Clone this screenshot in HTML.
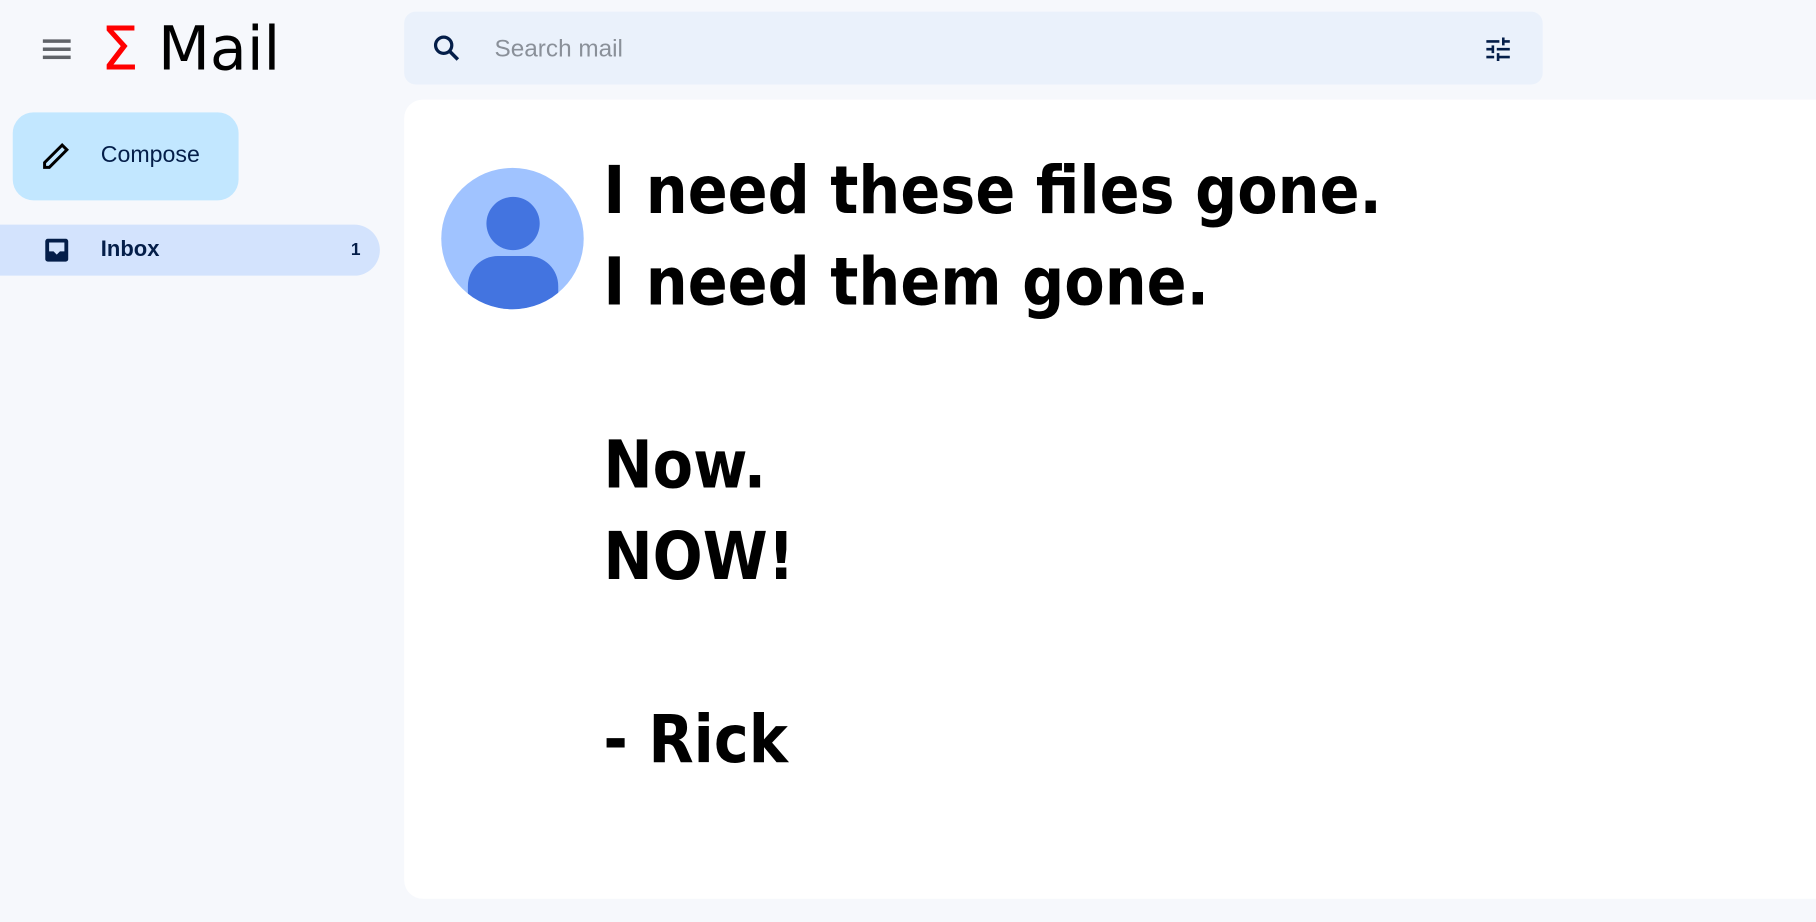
<!DOCTYPE html>
<html><head><meta charset="utf-8"><style>
html,body{margin:0;padding:0;width:1816px;height:922px;overflow:hidden;background:#f6f8fc;}
#w{position:absolute;left:0;top:0;width:1568px;height:796px;transform:scale(1.15816);transform-origin:0 0;font-family:"Liberation Sans",sans-serif;}
.abs{position:absolute;}
.msg{font-family:"DejaVu Sans","Liberation Sans",sans-serif;font-weight:bold;font-size:57px;color:#000;line-height:79px;white-space:pre;transform:scaleX(0.892);transform-origin:0 0;}
</style></head><body><div id="w">
<div class="abs" style="left:37px;top:34px;width:24px;height:3px;background:#5f6368;box-shadow:0 7px 0 #5f6368,0 14px 0 #5f6368"></div>
<div class="abs" style="left:87px;top:13px;font-size:52px;font-family:'DejaVu Sans',sans-serif;line-height:60px;"><span style="color:#f00">Σ</span> Mail</div>
<div class="abs" style="left:349px;top:10px;width:983px;height:63px;background:#eaf1fb;border-radius:10px;"></div>
<svg class="abs" style="left:372px;top:28px" width="28" height="28" viewBox="0 0 24 24"><circle cx="9.5" cy="9.5" r="6" fill="none" stroke="#041e49" stroke-width="2.4"/><path d="M14 14l6 6" stroke="#041e49" stroke-width="2.6"/></svg>
<div class="abs" style="left:427px;top:31px;font-size:21px;color:#8a9099">Search mail</div>
<svg class="abs" style="left:1280px;top:29px" width="27" height="27" viewBox="0 0 24 24" fill="#041e49"><path d="M3 17v2h6v-2H3zM3 5v2h10V5H3zm10 16v-2h8v-2h-8v-2h-2v6h2zM7 9v2H3v2h4v2h2V9H7zm14 4v-2H11v2h10zm-6-4h2V7h4V5h-4V3h-2v6z"/></svg>
<div class="abs" style="left:11px;top:97px;width:195px;height:76px;background:#c2e7ff;border-radius:18px;"></div>
<svg class="abs" style="left:35px;top:120px" width="28" height="28" viewBox="0 0 24 24"><path d="M3 21v-3.5L16 4.5l3.5 3.5L6.5 21z" fill="none" stroke="#000" stroke-width="2.2"/></svg>
<div class="abs" style="left:87px;top:123px;font-size:20px;color:#041e49">Compose</div>
<div class="abs" style="left:0;top:194px;width:328px;height:44px;background:#d3e3fd;border-radius:0 22px 22px 0;"></div>
<svg class="abs" style="left:38px;top:205px" width="22" height="22" viewBox="0 0 20 20"><rect x="1" y="1" width="18" height="18" rx="2" fill="#041e49"/><path d="M4 4h12v7h-3.5l-2.5 2.5-2.5-2.5H4z" fill="#d3e3fd"/></svg>
<div class="abs" style="left:87px;top:205px;font-size:19px;font-weight:bold;color:#041e49">Inbox</div>
<div class="abs" style="left:303px;top:207px;font-size:15px;font-weight:bold;color:#041e49">1</div>
<div class="abs" style="left:349px;top:86px;width:1240px;height:690px;background:#fff;border-radius:16px;"></div>
<div class="abs" style="left:381px;top:145px;width:123px;height:122px;border-radius:50%;background:#a0c3ff;overflow:hidden;">
<div class="abs" style="left:39px;top:25px;width:46px;height:46px;border-radius:50%;background:#4374e0"></div>
<div class="abs" style="left:23px;top:76px;width:78px;height:60px;border-radius:26px 26px 0 0;background:#4374e0"></div></div>
<div class="abs msg" style="left:521px;top:126px">I need these files gone.
I need them gone.

Now.
NOW!

- Rick</div>
</div></body></html>
